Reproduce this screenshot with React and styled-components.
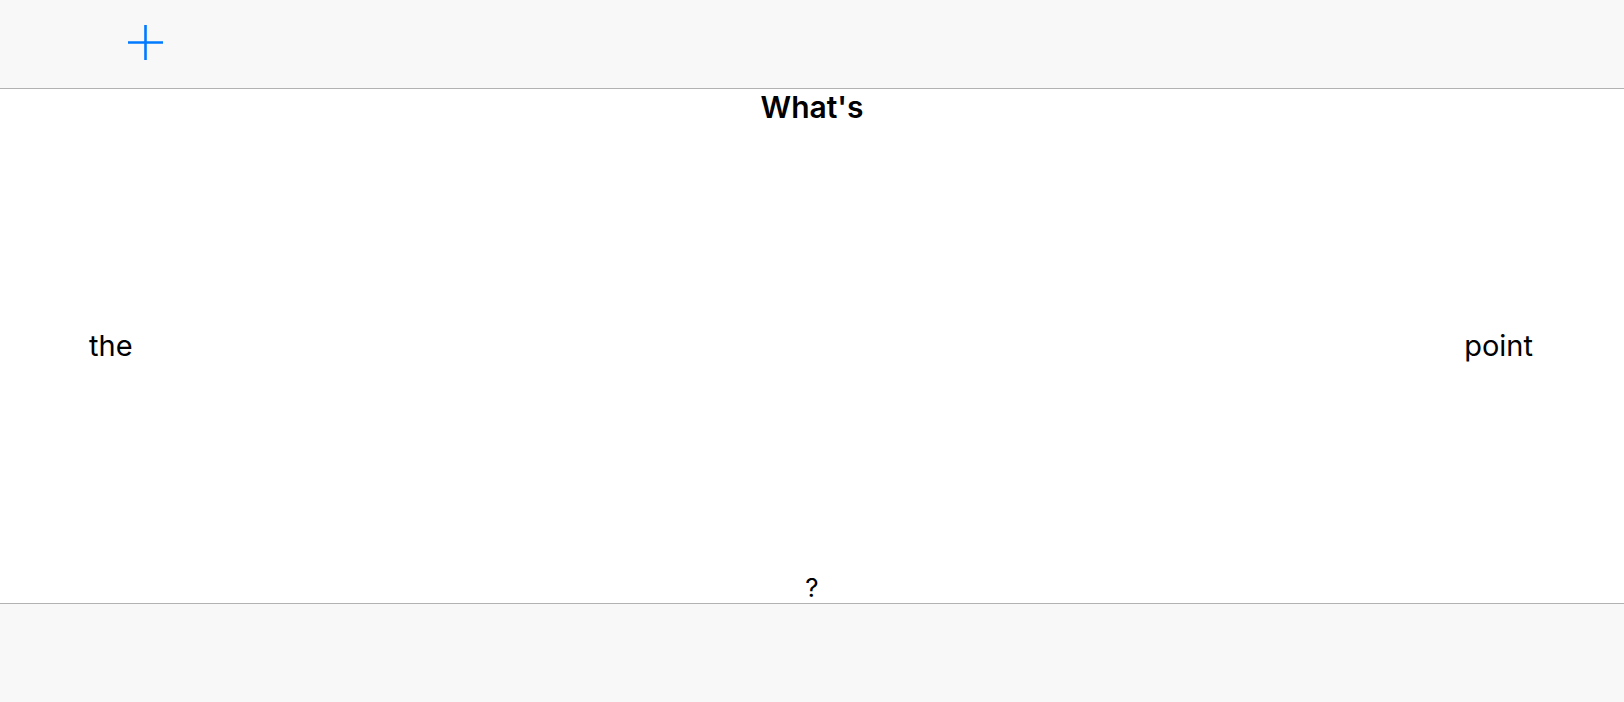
import React from "react";
import styled, { createGlobalStyle } from "styled-components";

const GlobalStyle = createGlobalStyle`
  html, body {
    margin: 0;
    padding: 0;
    background: #ffffff;
  }
  body {
    font-family: Inter, "Noto Sans", "Liberation Sans", sans-serif;
    color: #000000;
  }
`;

const Screen = styled.div`
  display: flex;
  flex-direction: column;
  height: 100vh;
  overflow: hidden;
`;

const Toolbar = styled.header`
  flex: 0 0 auto;
  box-sizing: border-box;
  height: 89px;
  display: flex;
  align-items: flex-start;
  padding: 25px 0 0 128px;
  background: #f8f8f8;
  border-bottom: 1px solid #b2b2b2;
`;

const AddButton = styled.button`
  width: 35px;
  height: 35px;
  padding: 0;
  border: none;
  background: none;
  color: #007aff;
  cursor: pointer;
  display: block;
`;

const Content = styled.main`
  flex: 1;
  display: grid;
  grid-template-rows: auto 1fr auto;
  background: #ffffff;
`;

const Title = styled.h1`
  margin: 0;
  text-align: center;
  font-size: 30px;
  font-weight: 600;
  line-height: normal;
`;

const Middle = styled.div`
  display: flex;
  align-items: center;
  justify-content: space-between;
  padding: 0 91px 6px 89px;
`;

const Word = styled.span`
  font-size: ${({ $size }) => $size || 29}px;
  font-weight: 400;
  line-height: normal;
`;

const Bottom = styled.div`
  text-align: center;
`;

const BottomBar = styled.footer`
  flex: 0 0 auto;
  box-sizing: border-box;
  height: 99px;
  background: #f8f8f8;
  border-top: 1px solid #b2b2b2;
`;

const PlusIcon = () => (
  <svg width="35" height="35" viewBox="0 0 35 35" fill="none">
    <path d="M17.5 0V35M0 17.5H35" stroke="currentColor" strokeWidth="2.6" />
  </svg>
);

export default function App() {
  return (
    <>
      <GlobalStyle />
      <Screen>
        <Toolbar>
          <AddButton aria-label="Add">
            <PlusIcon />
          </AddButton>
        </Toolbar>
        <Content>
          <Title>What's</Title>
          <Middle>
            <Word>the</Word>
            <Word>point</Word>
          </Middle>
          <Bottom>
            <Word $size={26}>?</Word>
          </Bottom>
        </Content>
        <BottomBar />
      </Screen>
    </>
  );
}
